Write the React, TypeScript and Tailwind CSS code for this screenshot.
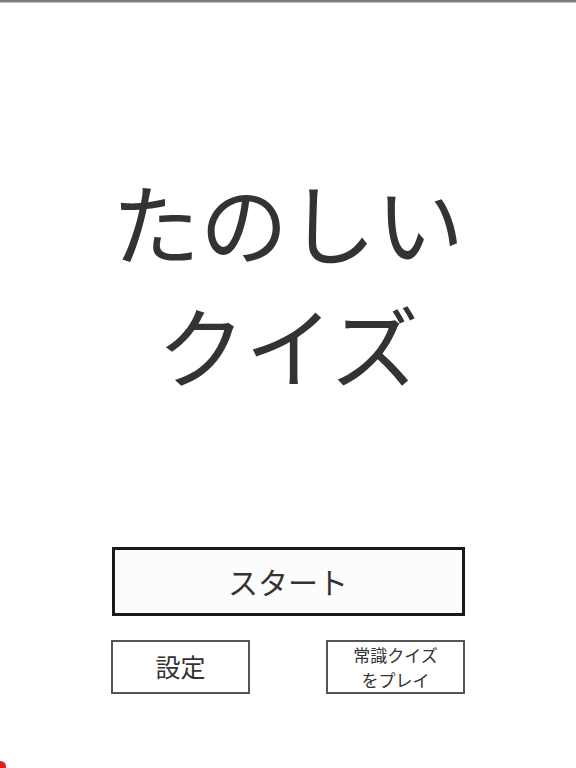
export default function App() {
  return (
    <div
      className="relative w-full h-[768px] overflow-hidden bg-white flex flex-col items-center text-[#333333]"
      style={{fontFamily: '"Noto Sans CJK JP", "Noto Sans", sans-serif'}}>
      {/* top hairline */}
      <div className="w-full h-[2px] bg-[#7d7d7d] border-b border-[#c4c4c4] box-content" />

      {/* title */}
      <h1 className="mt-[155px] text-[88px] leading-[123px] font-normal text-center">
        たのしい
        <br />
        クイズ
      </h1>

      {/* start */}
      <button className="mt-[143px] w-[353px] h-[69px] border-[3px] border-[#1a1a1a] bg-[#fcfcfc] text-[30px] text-[#333333] flex items-center justify-center">
        スタート
      </button>

      <div className="mt-[24px] w-[354px] flex justify-between">
        <button className="w-[139px] h-[54px] border-2 border-[#555555] bg-white text-[25px] flex items-center justify-center">
          設定
        </button>
        <button className="w-[139px] h-[54px] border-2 border-[#555555] bg-white text-[17px] leading-[25px] text-center">
          常識クイズ
          <br />
          をプレイ
        </button>
      </div>

      {/* little red dot in the corner */}
      <div className="absolute -left-[5px] -bottom-[4px] w-[11px] h-[11px] rounded-full bg-[#e0201c]" />
    </div>
  );
}
